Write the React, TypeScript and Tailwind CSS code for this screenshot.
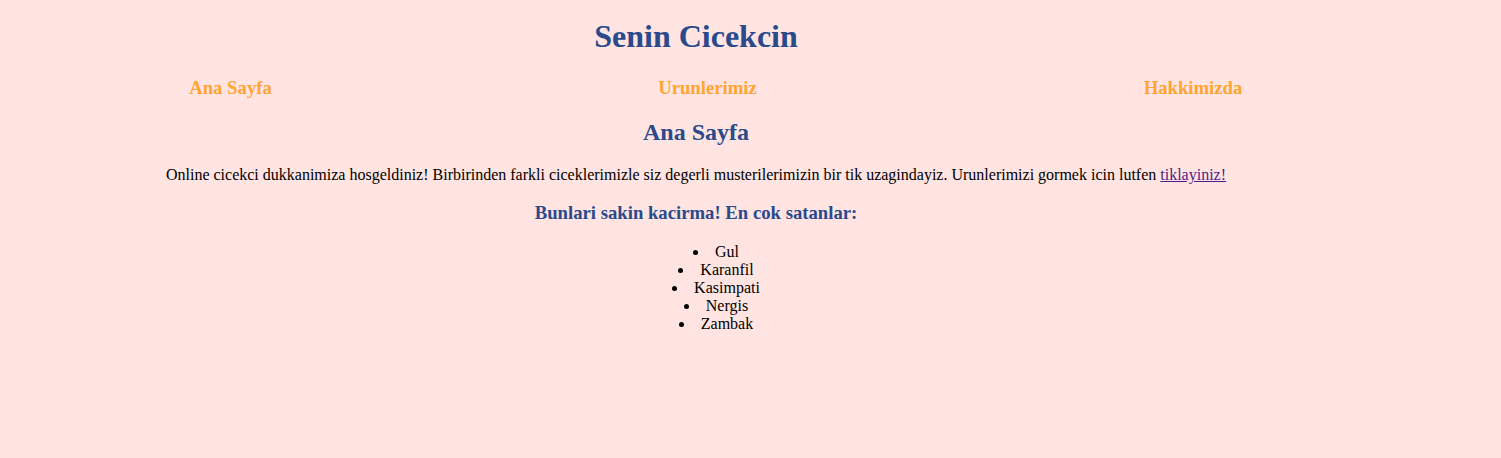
export default function App() {
  const items = ["Gul", "Karanfil", "Kasimpati", "Nergis", "Zambak"];
  return (
    <div className="min-h-[458px] w-full bg-[#ffe4e1] font-['Liberation_Serif',serif] text-black">
      <div className="w-[1392px] text-center">
        <h1 className="pt-[18px] text-[32px] leading-[36px] font-bold text-[#2a4a8c]">Senin Cicekcin</h1>
        <nav className="mt-[23px] flex text-[18.72px] leading-[22px] font-bold text-[#ffa533]">
          <div className="w-[461px] shrink-0 text-center">Ana Sayfa</div>
          <div className="w-[493px] shrink-0 text-center">Urunlerimiz</div>
          <div className="w-[478px] shrink-0 text-center">Hakkimizda</div>
        </nav>
        <h2 className="mt-[19px] text-[24px] leading-[28px] font-bold text-[#2a4a8c]">Ana Sayfa</h2>
        <p className="mt-[20px] text-[16px] leading-[18px]">
          Online cicekci dukkanimiza hosgeldiniz! Birbirinden farkli ciceklerimizle siz degerli musterilerimizin bir tik uzagindayiz. Urunlerimizi gormek icin lutfen{" "}
          <a href="#" className="text-[#551a8b] underline">tiklayiniz!</a>
        </p>
        <h3 className="mt-[18px] text-[18.72px] leading-[22px] font-bold text-[#2a4a8c]">Bunlari sakin kacirma! En cok satanlar:</h3>
        <ul className="mt-[19px] list-inside list-disc pl-[40px] text-[16px] leading-[18px]">
          {items.map((i) => (
            <li key={i}>{i}</li>
          ))}
        </ul>
      </div>
    </div>
  );
}
